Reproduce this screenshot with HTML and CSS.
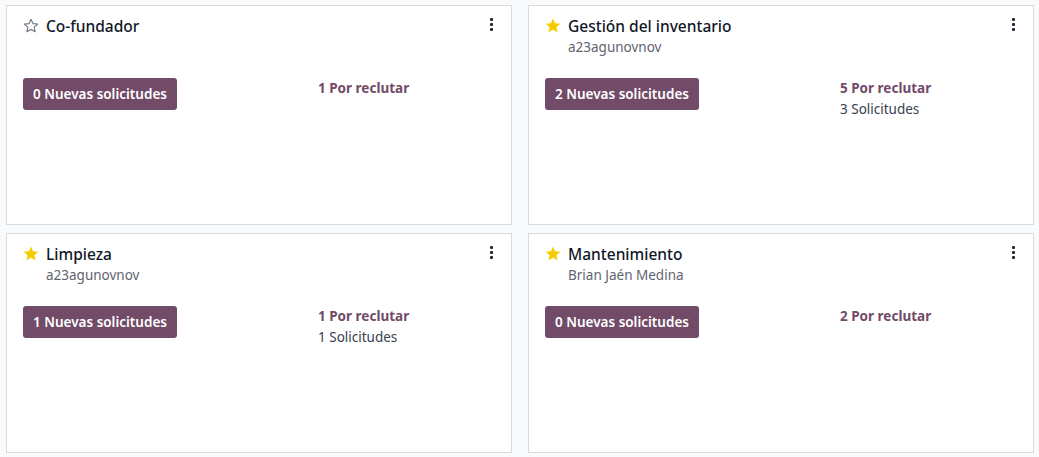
FILE: index.html
```html
<!DOCTYPE html>
<html lang="es">
<head>
<meta charset="utf-8">
<link rel="stylesheet" href="styles.css">
</head>
<body>
<div class="board">
  <div class="card">
    <div class="head">
      <div class="title-row">
        <svg class="star" viewBox="0 0 16 16" width="16" height="16"><path d="M8 1.3l1.95 4.3 4.7.45-3.55 3.15 1.05 4.6L8 11.4l-4.15 2.4 1.05-4.6L1.35 6.05l4.7-.45z" fill="none" stroke="#6b7280" stroke-width="1.1" stroke-linejoin="round"/></svg>
        <span class="title">Co-fundador</span>
      </div>
      <div class="sub"></div>
      <span class="dots"><i></i><i></i><i></i></span>
    </div>
    <div class="body">
      <div class="col-left"><span class="btn">0 Nuevas solicitudes</span></div>
      <div class="col-right"><div class="hire">1 Por reclutar</div></div>
    </div>
  </div>
  <div class="card">
    <div class="head">
      <div class="title-row">
        <svg class="star" viewBox="0 0 16 16" width="16" height="16"><path d="M8 1.3l1.95 4.3 4.7.45-3.55 3.15 1.05 4.6L8 11.4l-4.15 2.4 1.05-4.6L1.35 6.05l4.7-.45z" fill="#f3cc00" stroke="#f3cc00" stroke-width="0.6" stroke-linejoin="round"/></svg>
        <span class="title">Gestión del inventario</span>
      </div>
      <div class="sub">a23agunovnov</div>
      <span class="dots"><i></i><i></i><i></i></span>
    </div>
    <div class="body">
      <div class="col-left"><span class="btn">2 Nuevas solicitudes</span></div>
      <div class="col-right"><div class="hire">5 Por reclutar</div><div class="apps">3 Solicitudes</div></div>
    </div>
  </div>
  <div class="card">
    <div class="head">
      <div class="title-row">
        <svg class="star" viewBox="0 0 16 16" width="16" height="16"><path d="M8 1.3l1.95 4.3 4.7.45-3.55 3.15 1.05 4.6L8 11.4l-4.15 2.4 1.05-4.6L1.35 6.05l4.7-.45z" fill="#f3cc00" stroke="#f3cc00" stroke-width="0.6" stroke-linejoin="round"/></svg>
        <span class="title">Limpieza</span>
      </div>
      <div class="sub">a23agunovnov</div>
      <span class="dots"><i></i><i></i><i></i></span>
    </div>
    <div class="body">
      <div class="col-left"><span class="btn">1 Nuevas solicitudes</span></div>
      <div class="col-right"><div class="hire">1 Por reclutar</div><div class="apps">1 Solicitudes</div></div>
    </div>
  </div>
  <div class="card">
    <div class="head">
      <div class="title-row">
        <svg class="star" viewBox="0 0 16 16" width="16" height="16"><path d="M8 1.3l1.95 4.3 4.7.45-3.55 3.15 1.05 4.6L8 11.4l-4.15 2.4 1.05-4.6L1.35 6.05l4.7-.45z" fill="#f3cc00" stroke="#f3cc00" stroke-width="0.6" stroke-linejoin="round"/></svg>
        <span class="title">Mantenimiento</span>
      </div>
      <div class="sub">Brian Jaén Medina</div>
      <span class="dots"><i></i><i></i><i></i></span>
    </div>
    <div class="body">
      <div class="col-left"><span class="btn">0 Nuevas solicitudes</span></div>
      <div class="col-right"><div class="hire">2 Por reclutar</div></div>
    </div>
  </div>
</div>
</body>
</html>
```
FILE: styles.css
```css
* { box-sizing: border-box; }
html, body { margin: 0; padding: 0; }
body {
  background: #f9fafb;
  font-family: "Noto Sans", "Open Sans", sans-serif;
  color: #111827;
  width: 1039px;
  height: 457px;
  overflow: hidden;
}
.board {
  display: grid;
  grid-template-columns: 506px 506px;
  grid-auto-rows: 220px;
  column-gap: 16px;
  row-gap: 8px;
  padding: 5px 0 0 6px;
}
.card {
  background: #fff;
  border: 1px solid #d8dadd;
  padding: 9px 16px 0 16px;
  display: flex;
  flex-direction: column;
}
.head {
  position: relative;
  height: 63px;
}
.title-row {
  display: flex;
  align-items: center;
  gap: 7px;
  height: 22px;
}
.star { flex: none; margin-top: -1px; }
.title {
  font-size: 15.5px;
  font-weight: 500;
  color: #111827;
  line-height: 22px;
}
.sub {
  margin-left: 23px;
  font-size: 13.5px;
  line-height: 20px;
  color: #5f6470;
  height: 20px;
}
.dots {
  position: absolute;
  right: 2px;
  top: 3px;
  display: flex;
  flex-direction: column;
  gap: 2px;
}
.dots i {
  display: block;
  width: 3px;
  height: 3px;
  background: #1f2937;
  border-radius: 1px;
}
.body {
  display: grid;
  grid-template-columns: 295px 1fr;
}
.btn {
  display: inline-flex;
  align-items: center;
  height: 32px;
  padding: 0 10px;
  background: #714b67;
  color: #fff;
  border-radius: 3px;
  font-size: 13.5px;
  font-weight: 600;
}
.col-right { font-size: 13.5px; line-height: 21px; }
.hire { color: #714b67; font-weight: 700; }
.apps { color: #374151; }
```
